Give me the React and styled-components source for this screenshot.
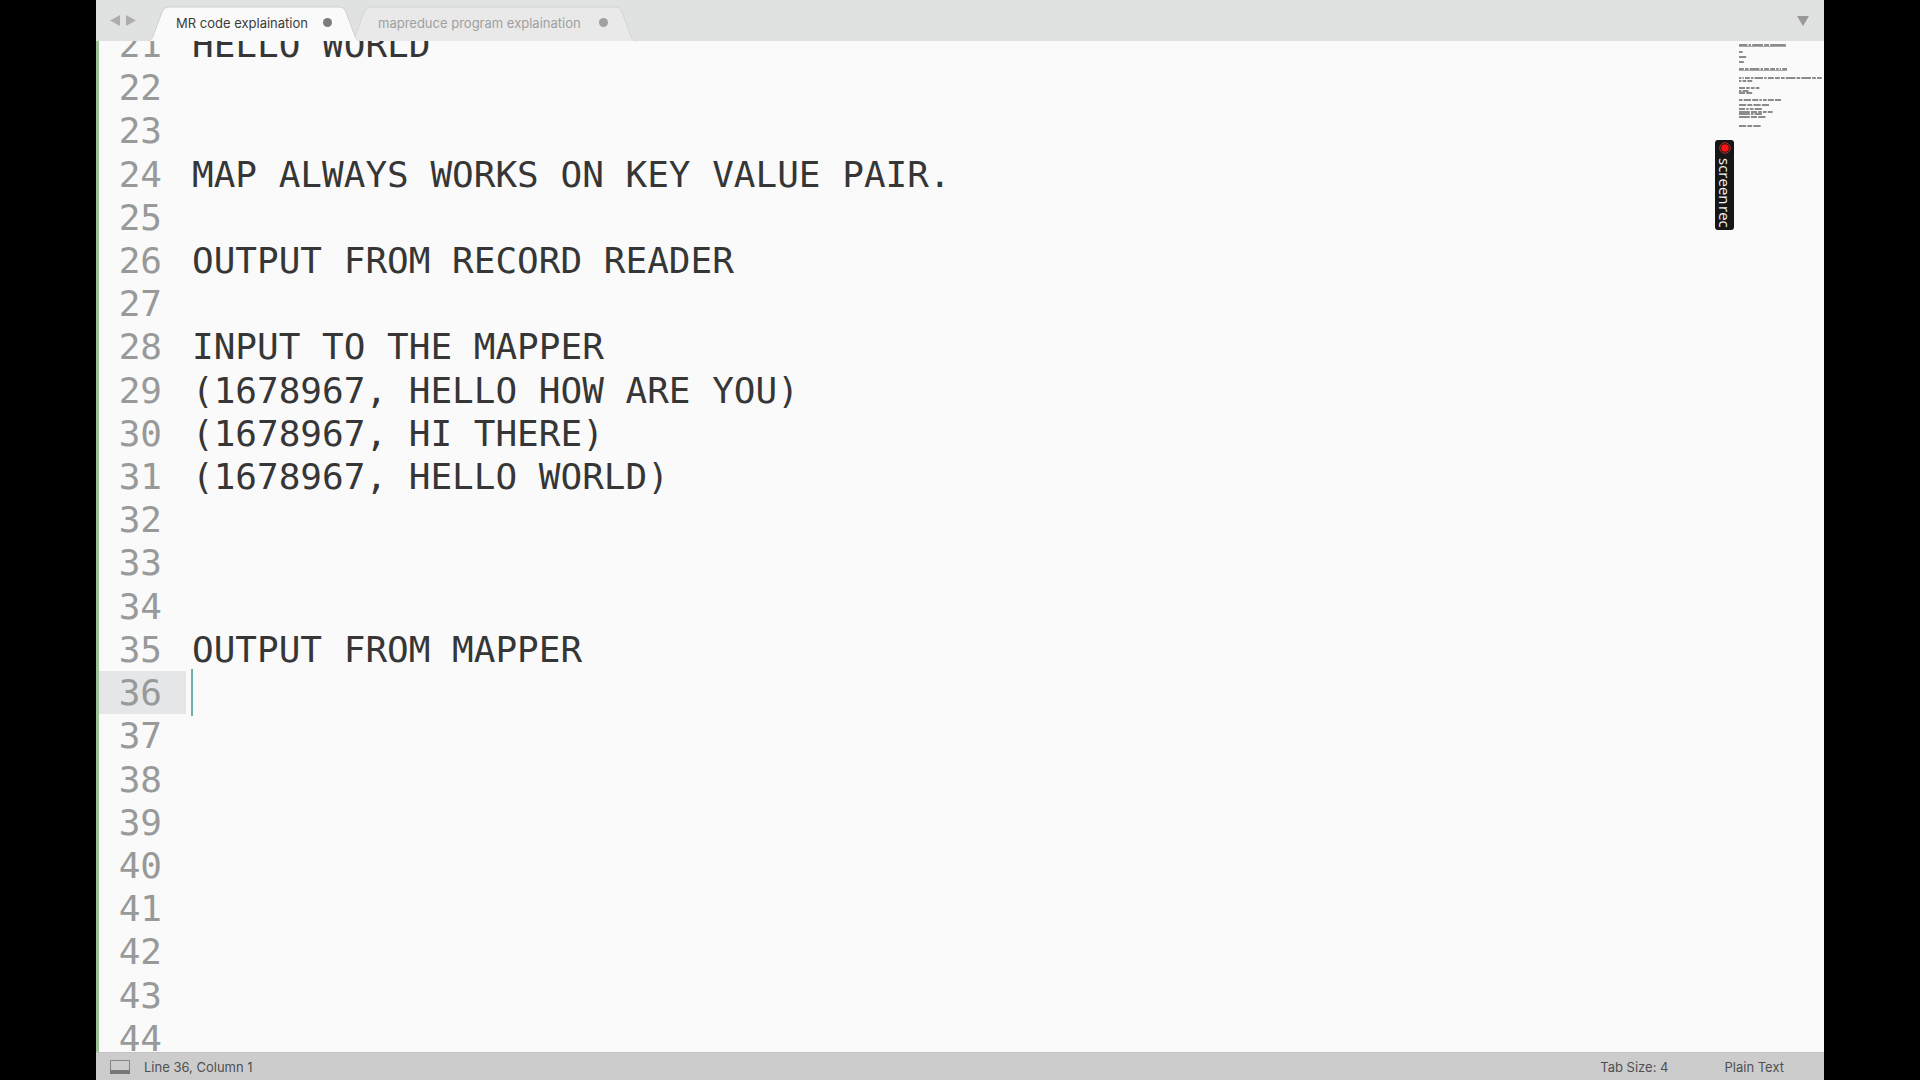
import React from 'react';
import styled, { createGlobalStyle } from 'styled-components';

const ui = 'Inter, "Liberation Sans", sans-serif';
const mono = '"DejaVu Sans Mono", "Liberation Mono", monospace';

const Global = createGlobalStyle`
  * { box-sizing: border-box; }
  body { margin: 0; background: #000; overflow: hidden; }
  button { border: 0; padding: 0; background: none; font: inherit; color: inherit; }
`;

const Stage = styled.div`
  height: 100vh;
  padding: 0 5%;
  background: #000;
`;

const Window = styled.main`
  height: 100%;
  display: flex;
  flex-direction: column;
  background: #fafafa;
  font-family: ${ui};
`;

const TabBar = styled.header`
  height: 41px;
  flex: none;
  display: flex;
  align-items: center;
  padding: 0 15px 0 14px;
  background: #e0e1e1;
`;

const History = styled.nav`
  display: flex;
  gap: 6px;
  width: 38px;
`;

const IconButton = styled.button`
  display: flex;
  svg { display: block; }
`;

const Tabs = styled.div`
  flex: 1;
  display: flex;
  align-self: flex-end;
`;

const Tab = styled.button`
  position: relative;
  z-index: ${(p) => (p.$active ? 1 : 0)};
  display: flex;
  align-items: center;
  justify-content: space-between;
  height: 35px;
  width: ${(p) => p.$width}px;
  padding: 0 28px 2px;
  margin-right: -10px;
  font-size: 13px;
  line-height: 16px;
  white-space: nowrap;
  color: ${(p) => (p.$active ? '#3c3c3c' : '#a0a0a0')};
`;

const TabShape = styled.svg`
  position: absolute;
  inset: 0;
  width: 100%;
  height: 100%;
`;

const TabLabel = styled.span`
  position: relative;
`;

const Dot = styled.span`
  position: relative;
  width: 9px;
  height: 9px;
  border-radius: 50%;
  background: ${(p) => (p.$active ? '#7b7b7b' : '#a0a0a0')};
`;

const Editor = styled.section`
  position: relative;
  flex: 1;
  min-height: 0;
  display: flex;
  overflow: hidden;
  border-left: 3px solid #9dbf95;
`;

const Lines = styled.ol`
  flex: 1;
  display: grid;
  grid-auto-rows: 1fr;
  height: calc(100% + 26px);
  margin: -18px 0 0;
  padding: 0;
  list-style: none;
  font-family: ${mono};
  font-size: 36px;
  line-height: 43px;
`;

const Line = styled.li`
  display: flex;
  min-height: 0;
  color: #363636;
  white-space: pre;
`;

const LineNumber = styled.span`
  width: 87px;
  padding-right: 24px;
  text-align: right;
  color: #989999;
  background: ${(p) => (p.$current ? '#e4e6e8' : 'transparent')};
`;

const Code = styled.span`
  padding-left: 6px;
`;

const Caret = styled.span`
  width: 2px;
  height: 47px;
  margin: -2px 0 0 5px;
  background: #6fb0ab;
`;

const MiniMap = styled.aside`
  flex: none;
  width: 85px;
  overflow: hidden;
  svg { display: block; }
`;

const Recorder = styled.button`
  position: absolute;
  top: 99px;
  right: 90px;
  width: 19px;
  height: 90px;
  display: flex;
  flex-direction: column;
  align-items: center;
  gap: 4px;
  padding-top: 2px;
  border-radius: 3px;
  background: #161616;
  color: #f2f2f2;
  font: 15px/18px "Open Sans", sans-serif;
  svg { flex: none; }
`;

const RecorderName = styled.span`
  display: flex;
  gap: 1px;
  writing-mode: vertical-rl;
`;

const StatusBar = styled.footer`
  height: 28px;
  flex: none;
  display: flex;
  align-items: center;
  padding: 0 40px 0 14px;
  border-top: 1px solid #c2c2c2;
  background: #cccccc;
  color: #505050;
  font-size: 13px;
  line-height: 16px;
`;

const Position = styled.span`
  flex: 1;
  padding-left: 14px;
`;

const StatusButton = styled.button`
  margin-left: 56px;
`;

const code = {
  21: 'HELLO WORLD',
  24: 'MAP ALWAYS WORKS ON KEY VALUE PAIR.',
  26: 'OUTPUT FROM RECORD READER',
  28: 'INPUT TO THE MAPPER',
  29: '(1678967, HELLO HOW ARE YOU)',
  30: '(1678967, HI THERE)',
  31: '(1678967, HELLO WORLD)',
  35: 'OUTPUT FROM MAPPER',
};
const numbers = Array.from({ length: 24 }, (_, i) => 21 + i);
const currentLine = 36;

// Each run of text in the overview: top, word lengths, underlined
const overview = [
  [3, [7, 2, 9, 4, 13], true],
  [10, [3]],
  [15, [6]],
  [20, [4]],
  [27, [4, 3, 8, 2, 4, 4, 2, 1, 4], true],
  [36, [2, 1, 4, 2, 7, 2, 5, 4, 3, 8, 3, 8, 3, 4]],
  [39, [2, 3, 4]],
  [46, [5, 3, 3, 3]],
  [49, [2, 5]],
  [51, [5, 5]],
  [58, [3, 6, 5, 2, 3, 5, 5]],
  [63, [6, 4, 6, 6]],
  [67, [5, 2, 3, 6]],
  [70, [9, 5, 3, 3, 4]],
  [72, [9, 2, 6]],
  [75, [9, 5, 6]],
  [84, [6, 4, 6]],
];

function Overview() {
  return (
    <svg width="85" height="90" aria-hidden="true">
      {overview.map(([y, words, underlined]) => {
        let x = 0;
        const marks = words.map((n, i) => {
          const mark = <rect key={i} x={x} y={y} width={n * 1.2} height="2" fill="#8b8b8b" />;
          x += (n + 1) * 1.2;
          return mark;
        });
        return (
          <g key={y}>
            {marks}
            {underlined && <rect x="0" y={y + 2} width={x - 1} height="1" fill="#a8a8a8" />}
          </g>
        );
      })}
    </svg>
  );
}

function EditorTab({ active, width, children }) {
  const edge = `M0 35 C5 34 5 29 7 25 L14 6 Q16 1 20 1 H${width - 20} Q${width - 16} 1 ${width - 14} 6 L${width - 7} 25 C${width - 5} 29 ${width - 5} 34 ${width} 35`;
  return (
    <Tab role="tab" aria-selected={active} $active={active} $width={width}>
      <TabShape aria-hidden="true">
        <path d={edge} fill={active ? '#fafafa' : '#e9e9e9'} stroke={active ? '#cfcfcf' : '#d3d3d3'} />
      </TabShape>
      <TabLabel>{children}</TabLabel>
      <Dot $active={active} />
    </Tab>
  );
}

export default function App() {
  return (
    <>
      <Global />
      <Stage>
        <Window>
          <TabBar>
            <History>
              <IconButton aria-label="Previous tab">
                <svg width="10" height="11"><path d="M10 0v11L0 5.500z" fill="#adadad" /></svg>
              </IconButton>
              <IconButton aria-label="Next tab">
                <svg width="10" height="11"><path d="M0 0v11L10 5.500z" fill="#adadad" /></svg>
              </IconButton>
            </History>
            <Tabs role="tablist">
              <EditorTab active width={212}>MR code explaination</EditorTab>
              <EditorTab active={false} width={286}>mapreduce program explaination</EditorTab>
            </Tabs>
            <IconButton aria-label="Show tabs">
              <svg width="12" height="10"><path d="M0 0h12L6 10z" fill="#989898" /></svg>
            </IconButton>
          </TabBar>
          <Editor aria-label="MR code explaination">
            <Lines>
              {numbers.map((n) => (
                <Line key={n}>
                  <LineNumber $current={n === currentLine}>{n}</LineNumber>
                  {n === currentLine ? <Caret /> : <Code>{code[n]}</Code>}
                </Line>
              ))}
            </Lines>
            <MiniMap><Overview /></MiniMap>
            <Recorder>
              <svg width="12" height="12" viewBox="0 0 12 12" aria-hidden="true">
                <circle cx="6" cy="6" r="5.3" fill="none" stroke="#c93434" strokeWidth="0.9" />
                <circle cx="6" cy="6" r="3.8" fill="#ff1414" />
              </svg>
              <RecorderName><span>screen</span><span>rec</span></RecorderName>
            </Recorder>
          </Editor>
          <StatusBar>
            <IconButton aria-label="Toggle side panel">
              <svg width="20" height="14"><path d="M.5.5h19v13H.5z" fill="none" stroke="#828282" /><path d="M0 10h20v4H0z" fill="#777" /></svg>
            </IconButton>
            <Position>Line 36, Column 1</Position>
            <StatusButton>Tab Size: 4</StatusButton>
            <StatusButton>Plain Text</StatusButton>
          </StatusBar>
        </Window>
      </Stage>
    </>
  );
}
